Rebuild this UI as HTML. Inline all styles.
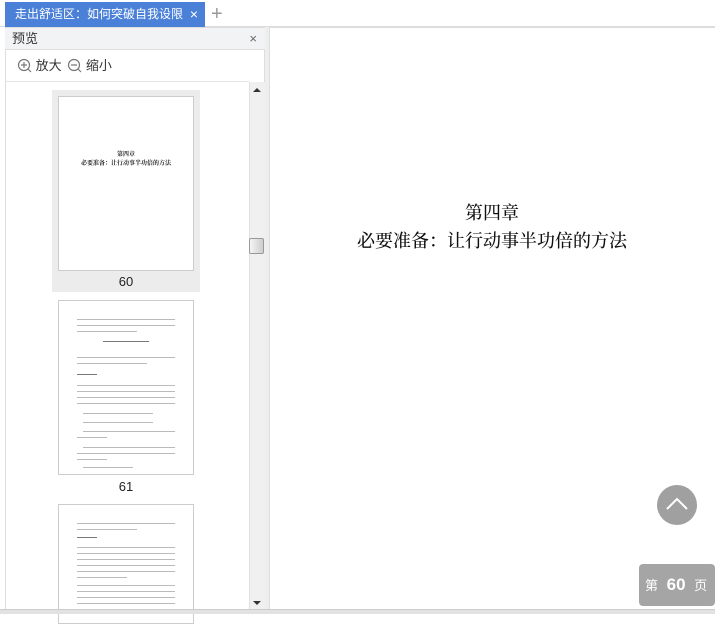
<!DOCTYPE html>
<html><head><meta charset="utf-8"><style>
*{margin:0;padding:0;box-sizing:border-box}
body{width:715px;height:614px;overflow:hidden;background:#fff;position:relative;font-family:"Liberation Sans","Noto Sans CJK SC",sans-serif}
.a{position:absolute}
.pg{position:absolute;left:58px;width:136px;background:#fff;border:1px solid #ccc}
.ln{position:absolute;height:1px;background:#bbb}
</style></head><body>
<div class="a" style="left:0;top:0;width:715px;height:27px;background:#fff;border-bottom:1px solid #ddd"></div>
<div class="a" style="left:5px;top:2px;width:200px;height:25px;background:#4a80d8;color:#fff;font-size:12px;line-height:25px;padding-left:10px;white-space:nowrap;overflow:hidden">走出舒适区：如何突破自我设限<span style="position:absolute;right:7px;top:0;font-size:14px">×</span></div>
<div class="a" style="left:211px;top:2px;font-size:20px;color:#999;line-height:24px">+</div>
<div class="a" style="left:5px;top:27px;width:260px;height:587px;border:1px solid #ddd;background:#fff"></div>
<div class="a" style="left:5px;top:28px;width:260px;height:22px;background:#f2f3f5;border-bottom:1px solid #ddd;font-size:13px;line-height:22px;padding-left:7px;color:#333">预览<span style="position:absolute;right:8px;color:#666">×</span></div>
<div class="a" style="left:17px;top:57px;font-size:13px;color:#333;line-height:18px">
<svg width="15" height="15" style="vertical-align:-3px"><circle cx="7" cy="7" r="5.5" fill="none" stroke="#777" stroke-width="1.2"/><path d="M4 7h6M7 4v6M11 11l3 3" stroke="#777" stroke-width="1.2"/></svg> 放大
<svg width="15" height="15" style="vertical-align:-3px;margin-left:2px"><circle cx="7" cy="7" r="5.5" fill="none" stroke="#777" stroke-width="1.2"/><path d="M4 7h6M11 11l3 3" stroke="#777" stroke-width="1.2"/></svg> 缩小</div>
<div class="a" style="left:5px;top:81px;width:244px;height:1px;background:#e5e5e5"></div>
<div class="a" style="left:249px;top:82px;width:16px;height:532px;background:#f0f0f0;border-left:1px solid #e0e0e0"></div>
<div class="a" style="left:253px;top:88px;width:0;height:0;border:4px solid transparent;border-bottom:4px solid #333;border-top:0"></div>
<div class="a" style="left:249px;top:238px;width:15px;height:16px;background:linear-gradient(90deg,#f5f5f5,#ccc);border:1px solid #999;border-radius:2px"></div>
<div class="a" style="left:253px;top:601px;border:4px solid transparent;border-top:4px solid #333;border-bottom:0"></div>
<div class="a" style="left:52px;top:90px;width:148px;height:202px;background:#ececec"></div>
<div class="pg" style="top:96px;height:175px"><div style="text-align:center;font-size:6px;margin-top:52px;font-weight:bold;color:#222;font-family:'Noto Serif CJK SC',serif">第四章<br>必要准备：让行动事半功倍的方法</div></div>
<div class="a" style="left:52px;top:274px;width:148px;text-align:center;font-size:13px;color:#222">60</div>
<div class="pg" style="top:300px;height:175px">
<div class="ln" style="left:18px;top:18px;width:98px"></div><div class="ln" style="left:18px;top:24px;width:98px"></div><div class="ln" style="left:18px;top:30px;width:60px"></div>
<div class="ln" style="left:44px;top:40px;width:46px;background:#777"></div>
<div class="ln" style="left:18px;top:56px;width:98px"></div><div class="ln" style="left:18px;top:62px;width:70px"></div>
<div class="ln" style="left:18px;top:73px;width:20px;background:#777"></div>
<div class="ln" style="left:18px;top:84px;width:98px"></div><div class="ln" style="left:18px;top:90px;width:98px"></div><div class="ln" style="left:18px;top:96px;width:98px"></div><div class="ln" style="left:18px;top:102px;width:98px"></div>
<div class="ln" style="left:24px;top:112px;width:70px"></div><div class="ln" style="left:24px;top:121px;width:70px"></div><div class="ln" style="left:24px;top:130px;width:92px"></div><div class="ln" style="left:18px;top:136px;width:30px"></div>
<div class="ln" style="left:24px;top:146px;width:92px"></div><div class="ln" style="left:18px;top:152px;width:98px"></div><div class="ln" style="left:18px;top:158px;width:30px"></div>
<div class="ln" style="left:24px;top:166px;width:50px"></div></div>
<div class="a" style="left:52px;top:479px;width:148px;text-align:center;font-size:13px;color:#222">61</div>
<div class="pg" style="top:504px;height:120px">
<div class="ln" style="left:18px;top:18px;width:98px"></div><div class="ln" style="left:18px;top:24px;width:60px"></div>
<div class="ln" style="left:18px;top:32px;width:20px;background:#777"></div>
<div class="ln" style="left:18px;top:42px;width:98px"></div><div class="ln" style="left:18px;top:48px;width:98px"></div><div class="ln" style="left:18px;top:54px;width:98px"></div><div class="ln" style="left:18px;top:60px;width:98px"></div><div class="ln" style="left:18px;top:66px;width:98px"></div><div class="ln" style="left:18px;top:72px;width:50px"></div>
<div class="ln" style="left:18px;top:80px;width:98px"></div><div class="ln" style="left:18px;top:86px;width:98px"></div><div class="ln" style="left:18px;top:92px;width:98px"></div><div class="ln" style="left:18px;top:98px;width:98px"></div></div>
<div class="a" style="left:265px;top:27px;width:4px;height:587px;background:#eee"></div>
<div class="a" style="left:269px;top:27px;width:446px;height:587px;border-left:1px solid #ddd;border-top:1px solid #ddd"></div>
<div class="a" style="left:269px;top:198px;width:446px;text-align:center;font-size:18px;line-height:28px;color:#111;font-weight:500;font-family:'Noto Serif CJK SC',serif">第四章<br>必要准备：让行动事半功倍的方法</div>
<div class="a" style="left:657px;top:485px;width:40px;height:40px;border-radius:50%;background:#a0a0a0"><svg width="40" height="40"><path d="M10 24l10-10 10 10" fill="none" stroke="#fff" stroke-width="2"/></svg></div>
<div class="a" style="left:639px;top:564px;width:76px;height:42px;background:#a5a5a5;border-radius:4px;color:#fff;font-size:13px;line-height:42px;padding-left:6px">第 <b style="font-size:17px;margin:0 5px">60</b> 页</div>
<div class="a" style="left:0;top:609px;width:715px;height:5px;background:#e2e2e2;border-top:1px solid #ccc"></div>
</body></html>
